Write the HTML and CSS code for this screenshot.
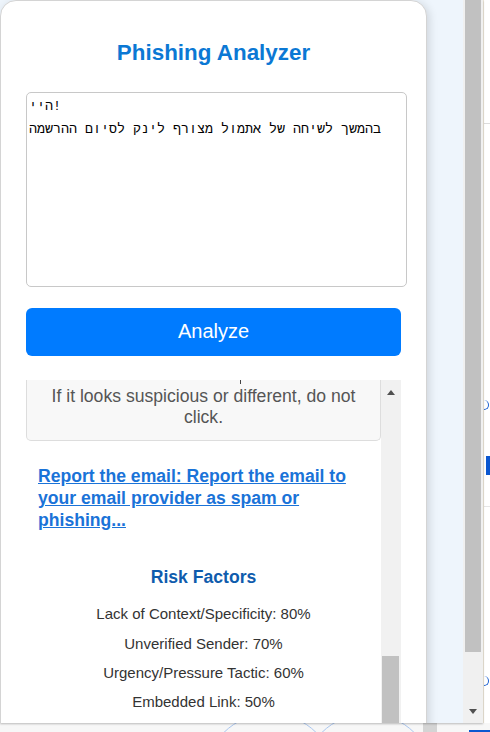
FILE: index.html
```html
<!DOCTYPE html>
<html lang="en">
<head>
<meta charset="utf-8">
<title>Phishing Analyzer</title>
<link rel="stylesheet" href="styles.css">
</head>
<body>
<div class="screen">
  <div class="popup">
    <div class="viewport">
      <div class="card">
        <h1 class="title">Phishing Analyzer</h1>
        <textarea class="input" spellcheck="false">היי!
בהמשך לשיחה של אתמול מצורף לינק לסיום ההרשמה</textarea>
        <button class="analyze" type="button">Analyze</button>
        <div class="results">
          <div class="results-body">
            <div class="tip">
              <div class="cut-mark"></div>
              If it looks suspicious or different, do not click.
            </div>
            <div class="report"><a href="#">Report the email: Report the email to your email provider as spam or phishing...</a></div>
            <h3 class="risk-title">Risk Factors</h3>
            <ul class="factors">
              <li>Lack of Context/Specificity: 80%</li>
              <li>Unverified Sender: 70%</li>
              <li>Urgency/Pressure Tactic: 60%</li>
              <li>Embedded Link: 50%</li>
            </ul>
          </div>
          <div class="rs-bar">
            <div class="rs-arrow"><span class="tri-up"></span></div>
            <div class="rs-gap"></div>
            <div class="rs-thumb"></div>
          </div>
        </div>
      </div>
    </div>
    <div class="win-bar">
      <div class="win-thumb"></div>
      <div class="win-gap"></div>
      <div class="win-arrow"><span class="tri-down"></span></div>
    </div>
  </div>
  <div class="side-strip">
    <div class="ss-line ss-line-1"></div>
    <div class="ss-glyph ss-glyph-1"></div>
    <div class="ss-block"></div>
    <div class="ss-line ss-line-2"></div>
    <div class="ss-glyph ss-glyph-2"></div>
  </div>
</div>
<div class="bottom-strip">
  <div class="bs-circle bs-circle-1"></div>
  <div class="bs-circle bs-circle-2"></div>
  <div class="bs-gray"></div>
  <div class="bs-blue"></div>
</div>
</body>
</html>
```
FILE: styles.css
```css
* { box-sizing: border-box; }
html, body { margin: 0; padding: 0; }
body {
  width: 490px;
  height: 732px;
  overflow: hidden;
  background: #ffffff;
  font-family: "Liberation Sans", Arial, sans-serif;
}

.screen { display: flex; height: 723px; }

.popup {
  display: flex;
  width: 483px;
  height: 723px;
  position: relative;
  z-index: 2;
  box-shadow: 0 1px 2px rgba(0,0,0,0.25);
}

.viewport {
  width: 463px;
  height: 723px;
  overflow: hidden;
  background: #eef5fc;
}

.card {
  width: 427px;
  height: 960px;
  background: #ffffff;
  border: 1px solid #d4d4d4;
  border-radius: 16px;
  padding: 25px;
  box-shadow: 2px 2px 10px rgba(0,0,0,0.14);
}

.title {
  margin: 14px 0 26px;
  font-size: 22.4px;
  line-height: 25.7px;
  font-weight: bold;
  color: #0b78d4;
  text-align: center;
}

.input {
  display: block;
  width: calc(100% + 6px);
  height: 195px;
  margin: 0;
  padding: 2px;
  border: 1px solid #c8c8c8;
  border-radius: 5px;
  font-family: "Liberation Mono", "Courier New", monospace;
  font-size: 13.33px;
  line-height: 23px;
  color: #000;
  resize: none;
  background: #fff;
}

.analyze {
  display: block;
  width: 100%;
  height: 48px;
  margin-top: 21px;
  border: none;
  border-radius: 6px;
  background: #007bff;
  color: #ffffff;
  font-family: "Liberation Sans", Arial, sans-serif;
  font-size: 20px;
}

.results {
  display: flex;
  height: 380px;
  margin-top: 24px;
}

.results-body {
  flex: 1;
  overflow: hidden;
}

.tip {
  border: 1px solid #dddddd;
  border-top: none;
  border-radius: 0 0 5px 5px;
  background: #f8f8f8;
  color: #555555;
  font-size: 17.6px;
  line-height: 20.8px;
  text-align: center;
  padding: 0 15px 13px;
}

.cut-mark {
  width: 1px;
  height: 4px;
  margin: 0 0 2px 198px;
  background: #444;
}

.report {
  margin-top: 25px;
  padding: 0 12px;
  font-size: 17.6px;
  line-height: 21.7px;
  font-weight: bold;
}
.report a { color: #1a73d8; text-decoration: underline; }

.risk-title {
  margin: 36px 0 18px;
  font-size: 17.6px;
  line-height: 20px;
  font-weight: bold;
  color: #0f5cad;
  text-align: center;
}

.factors {
  list-style: none;
  margin: 0;
  padding: 0;
}
.factors li {
  font-size: 15px;
  line-height: 18px;
  margin-bottom: 11.3px;
  color: #333333;
  text-align: center;
}

.rs-bar {
  width: 20px;
  display: flex;
  flex-direction: column;
  background: #f1f1f1;
}
.rs-arrow {
  height: 26px;
  display: flex;
  align-items: center;
  justify-content: center;
}
.tri-up {
  width: 0; height: 0;
  border-left: 4.5px solid transparent;
  border-right: 4.5px solid transparent;
  border-bottom: 5px solid #505050;
}
.rs-gap { height: 250px; }
.rs-thumb { height: 100px; margin: 0 2px 0 1px; background: #c1c1c1; }

.win-bar {
  width: 20px;
  display: flex;
  flex-direction: column;
  background: #f0f0f0;
}
.win-thumb { height: 652px; margin: 0 2px; background: #c1c1c1; }
.win-gap { flex: 1; }
.win-arrow {
  height: 24px;
  display: flex;
  align-items: center;
  justify-content: center;
}
.tri-down {
  width: 0; height: 0;
  border-left: 4.5px solid transparent;
  border-right: 4.5px solid transparent;
  border-top: 5px solid #505050;
}

.side-strip {
  width: 7px;
  height: 723px;
  position: relative;
  overflow: hidden;
  background: #ffffff;
  border-left: 1px solid #eee8da;
}
.ss-line { position: absolute; left: 0; right: 0; height: 1px; background: #dcdcdc; }
.ss-line-1 { top: 123px; }
.ss-line-2 { top: 506px; background: #e6e6e6; }
.ss-glyph {
  position: absolute;
  left: 0;
  width: 5px;
  height: 10px;
  border-right: 1.5px solid #1a5fd0;
  border-bottom: 1px solid #1a5fd0;
  border-radius: 0 5px 5px 0;
}
.ss-glyph-1 { top: 400px; }
.ss-glyph-2 { top: 676px; }
.ss-block { position: absolute; left: 2px; right: 0; top: 456px; height: 19px; background: #0b57d0; }

.bottom-strip {
  height: 9px;
  position: relative;
  overflow: hidden;
  background: #f7f7f7;
}
.bs-circle {
  position: absolute;
  top: -10px;
  width: 132px;
  height: 132px;
  border: 1px solid #a9c5ee;
  border-radius: 50%;
}
.bs-circle-1 { left: 204px; }
.bs-circle-2 { left: 302px; }
.bs-gray { position: absolute; left: 423px; top: 0; width: 14px; height: 9px; background: #d4d4d4; }
.bs-blue { position: absolute; left: 469px; right: 0; top: 7px; height: 2px; background: #0b57d0; }
```
